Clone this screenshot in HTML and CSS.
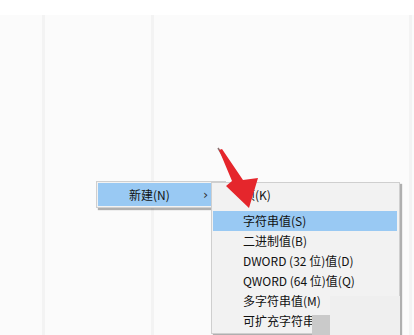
FILE: index.html
```html
<!DOCTYPE html>
<html lang="zh-CN">
<head>
<meta charset="utf-8">
<title>新建</title>
<link rel="stylesheet" href="styles.css">
</head>
<body>
<div class="top"></div>
<div class="panes">
  <div class="pane p1"></div>
  <div class="pane p2"></div>
  <div class="pane p3"></div>
  <div class="pane p4"></div>
</div>

<div class="menu main-menu">
  <div class="item hl"><span class="label">新建(N)</span><span class="chev">›</span></div>
</div>

<div class="menu sub-menu">
  <div class="item">项(K)</div>
  <div class="sep"></div>
  <div class="item hl">字符串值(S)</div>
  <div class="item">二进制值(B)</div>
  <div class="item">DWORD (32 位)值(D)</div>
  <div class="item">QWORD (64 位)值(Q)</div>
  <div class="item">多字符串值(M)</div>
  <div class="item">可扩充字符串值(E)</div>
</div>

<div class="blur-light"></div>
<div class="blur-dark"></div>

<svg class="arrow" width="414" height="335" viewBox="0 0 414 335">
  <line x1="218" y1="148" x2="224" y2="158" stroke="#8a7070" stroke-width="1.5"/>
  <polygon points="219,150 232,181 226,186 249,208 258,178 243,180 222,149" fill="#e5262c"/>
</svg>
</body>
</html>
```
FILE: styles.css
```css
html, body {
  margin: 0;
  padding: 0;
}
body {
  width: 414px;
  height: 335px;
  overflow: hidden;
  background: #fbfbfb;
  font-family: "Noto Sans CJK SC", "Noto Sans", sans-serif;
  font-size: 12px;
  color: #111;
  display: flex;
  flex-direction: column;
}
.top {
  height: 15px;
  background: #ffffff;
  flex: none;
}
.panes {
  flex: 1;
  display: flex;
}
.pane {
  border-right: 3px solid #f3f3f3;
}
.p1 { width: 42px; }
.p2 { width: 106px; }
.p3 { width: 255px; }
.p4 { flex: 1; border-right: none; }

.menu {
  position: absolute;
  background: #f2f2f2;
  border: 1px solid #cfcfcf;
  box-shadow: 2px 2px 1px rgba(0,0,0,0.3);
  box-sizing: border-box;
}
.main-menu {
  left: 96px;
  top: 181px;
  width: 130px;
  padding: 1px;
}
.main-menu .item {
  height: 23px;
  display: flex;
  align-items: center;
  padding-left: 31px;
}
.main-menu .label {
  width: 74px;
}
.chev {
  font-family: "DejaVu Sans", sans-serif;
  font-size: 13px;
  color: #333;
}
.sub-menu {
  left: 211px;
  top: 182px;
  width: 189px;
  padding: 1px 2px 2px 1px;
}
.item {
  height: 20px;
  line-height: 20px;
  padding-left: 30px;
  white-space: nowrap;
}
.sub-menu .item:first-child {
  height: 21px;
  line-height: 21px;
}
.hl {
  background: #99c9f3;
}
.sep {
  height: 6px;
}
.blur-light {
  position: absolute;
  left: 330px;
  top: 296px;
  width: 70px;
  height: 39px;
  background: #efefef;
}
.blur-dark {
  position: absolute;
  left: 312px;
  top: 315px;
  width: 18px;
  height: 20px;
  background: #cacaca;
}
.arrow {
  position: absolute;
  left: 0;
  top: 0;
}
```
